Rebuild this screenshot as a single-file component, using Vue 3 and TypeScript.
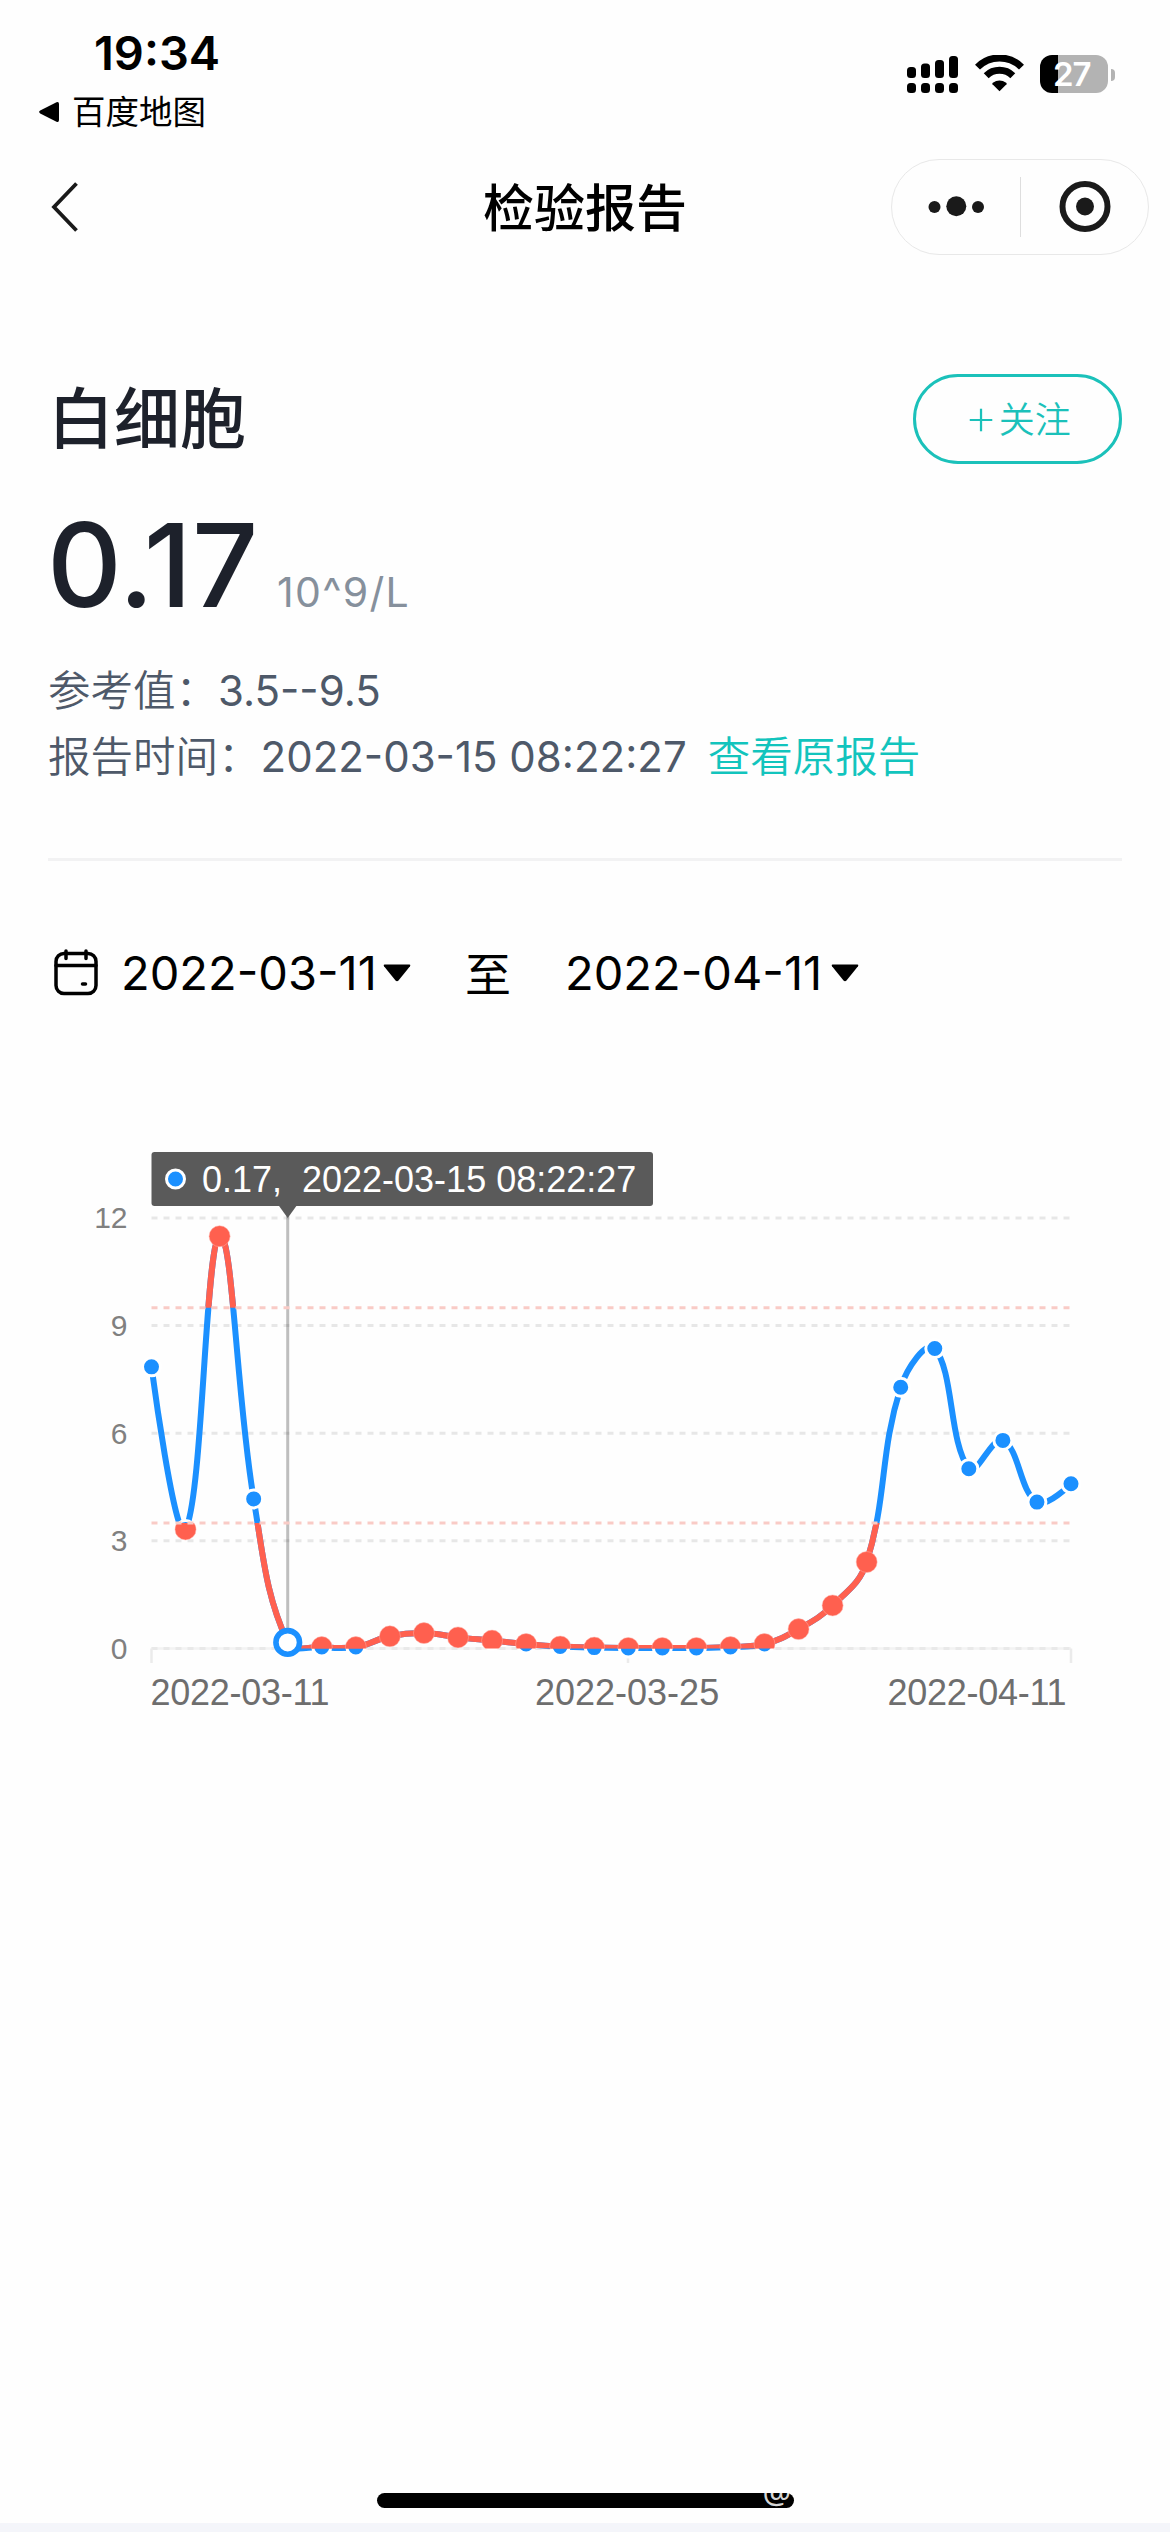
<script setup lang="ts">
interface Point {
  x: number
  y: number
}

const plotLeft = 151.5
const plotRight = 1071
const baseY = 1648.5
const unit = 35.88

const signalBars = [11, 14.5, 18, 22]
const yTicks = [12, 9, 6, 3, 0]
const limits = [9.5, 3.5]

const values = [
  7.85, 3.32, 11.49, 4.17, 0.17, 0.04, 0.04, 0.34, 0.43, 0.31, 0.22, 0.125, 0.055, 0.025,
  0.015, 0.015, 0.015, 0.04, 0.125, 0.54, 1.2, 2.41, 7.28, 8.36, 5.01, 5.8, 4.08, 4.59,
]
const selected = 4

const yOf = (v: number): number => baseY - v * unit
const step = (plotRight - plotLeft) / (values.length - 1)
const points: Point[] = values.map((v, i) => ({ x: plotLeft + i * step, y: yOf(v) }))
const markers = points.filter((_, i) => i !== selected)
const active = points[selected]

function smoothPath(pts: Point[], smooth = 0.4): string {
  const controls = pts.map((p, i) => {
    const prev = pts[i - 1]
    const next = pts[i + 1]
    if (!prev || !next) return { before: p, after: p }
    const d0 = Math.hypot(p.x - prev.x, p.y - prev.y)
    const d1 = Math.hypot(p.x - next.x, p.y - next.y)
    const vx = (next.x - prev.x) * smooth
    const vy = (next.y - prev.y) * smooth
    const a = d0 / (d0 + d1)
    const b = d1 / (d0 + d1)
    return {
      before: { x: p.x - vx * a, y: p.y - vy * a },
      after: { x: p.x + vx * b, y: p.y + vy * b },
    }
  })
  let d = `M${pts[0].x} ${pts[0].y}`
  for (let i = 1; i < pts.length; i++) {
    const c1 = controls[i - 1].after
    const c2 = controls[i].before
    d += ` C${c1.x} ${c1.y} ${c2.x} ${c2.y} ${pts[i].x} ${pts[i].y}`
  }
  return d
}

const curve = smoothPath(points)
</script>

<template>
  <div class="screen">
    <header class="status">
      <div class="status-left">
        <div class="time">19:34</div>
        <div class="back-app">
          <svg width="22" height="22" viewBox="0 0 22 22">
            <path d="M2.2 9.6 18.5 1.3Q21 .4 21 3V19Q21 21.600 18.500 20.700L2.200 12.400Q0 11 2.200 9.600Z" />
          </svg>
          <span>百度地图</span>
        </div>
      </div>
      <div class="status-right">
        <svg class="signal" width="51" height="38" viewBox="0 0 51 38">
          <g v-for="(h, i) in signalBars" :key="i">
            <rect :x="i * 14" :y="23 - h" width="9" :height="h" rx="3.500" />
            <rect :x="i * 14" y="28" width="9" height="10" rx="3.500" />
          </g>
        </svg>
        <svg class="wifi" width="49" height="37" viewBox="0 0 49 37">
          <path d="M24.500 36.300 17.500 29.200Q16.900 28.400 17.800 27.700Q24.500 23.300 31.200 27.700Q32.100 28.400 31.500 29.200Z" />
          <path d="M11.200 20.800A19 19 0 0 1 37.800 20.800" />
          <path d="M2.500 12.100A31 31 0 0 1 46.500 12.100" />
        </svg>
        <div class="battery"><span>27</span></div>
        <div class="nub"></div>
      </div>
    </header>

    <nav class="nav">
      <svg class="back" width="28" height="52" viewBox="0 0 28 52">
        <path d="M25.500 2.500 3 26 25.500 49.500" />
      </svg>
      <h1>检验报告</h1>
      <div class="capsule">
        <svg width="256" height="94" viewBox="0 0 256 94">
          <circle cx="42.500" cy="47" r="6" />
          <circle cx="64.300" cy="46.300" r="10" />
          <circle cx="86" cy="47" r="6" />
          <path class="split" d="M128.500 17V77" />
          <circle class="ring" cx="193" cy="46.500" r="22.500" />
          <circle cx="193" cy="46.500" r="9" />
        </svg>
      </div>
    </nav>

    <section class="summary">
      <div class="title-row">
        <h2>白细胞</h2>
        <button class="follow" type="button"><span class="plus">+</span>关注</button>
      </div>
      <div class="value-row">
        <span class="value">0.17</span>
        <span class="unit">10^9/L</span>
      </div>
      <div class="info"><span class="label">参考值：</span><span class="num">3.5--9.5</span></div>
      <div class="info">
        <span class="label">报告时间：</span><span class="num">2022-03-15 08:22:27</span>
        <a class="link">查看原报告</a>
      </div>
    </section>

    <section class="range">
      <svg class="calendar" width="44" height="48" viewBox="0 0 44 48">
        <rect x="2" y="4.500" width="40" height="40" rx="8" />
        <path d="M2 16.500H42M12 2V9.500M32 2V9.500" />
        <path d="M28.500 35H31.500" />
      </svg>
      <span class="date">2022-03-11</span>
      <svg class="caret" width="28" height="18" viewBox="0 0 28 18">
        <path d="M1.500 .5H26.500Q28 .7 27 2.200L15.500 16.400Q14 18 12.500 16.400L1 2.200Q0 .7 1.500 .5Z" />
      </svg>
      <span class="to">至</span>
      <span class="date second">2022-04-11</span>
      <svg class="caret" width="28" height="18" viewBox="0 0 28 18">
        <path d="M1.500 .5H26.500Q28 .7 27 2.200L15.500 16.400Q14 18 12.500 16.400L1 2.200Q0 .7 1.500 .5Z" />
      </svg>
    </section>

    <svg class="chart" width="1170" height="600" viewBox="0 1130 1170 600">
      <defs>
        <clipPath id="above"><rect x="0" y="1130" width="1170" :height="yOf(9.5) - 1130" /></clipPath>
        <clipPath id="below"><rect x="0" :y="yOf(3.5)" width="1170" :height="3.5 * unit" /></clipPath>
      </defs>

      <g class="grid">
        <path v-for="t in yTicks" :key="t" :d="`M${plotLeft} ${yOf(t)}H${plotRight}`" />
      </g>
      <g class="ticks">
        <path :d="`M${plotLeft} ${baseY}H${plotRight}`" opacity=".6" />
        <path :d="`M${plotLeft} ${baseY}V1663M628 ${baseY}V1663M${plotRight} ${baseY}V1663`" />
      </g>
      <g class="y-labels">
        <text v-for="t in yTicks" :key="t" x="127.500" :y="yOf(t) + 10.5">{{ t }}</text>
      </g>
      <g class="x-labels">
        <text x="150.500" y="1705" textLength="179">2022-03-11</text>
        <text x="535" y="1705">2022-03-25</text>
        <text x="887.500" y="1705" textLength="179">2022-04-11</text>
      </g>

      <path class="cursor" :d="`M${active.x} 1216V${baseY}`" />

      <g class="normal">
        <path :d="curve" />
        <circle v-for="(p, i) in markers" :key="i" :cx="p.x" :cy="p.y" r="9" />
      </g>
      <g v-for="zone in ['above', 'below']" :key="zone" class="abnormal" :clip-path="`url(#${zone})`">
        <path :d="curve" />
        <circle v-for="(p, i) in markers" :key="i" :cx="p.x" :cy="p.y" r="10.500" />
      </g>
      <g class="limits">
        <path v-for="l in limits" :key="l" :d="`M${plotLeft} ${yOf(l)}H${plotRight}`" />
      </g>
      <circle class="active" :cx="active.x" :cy="active.y" r="11.800" />

      <g class="tooltip">
        <rect x="151.500" y="1152" width="501.500" height="54" rx="3" />
        <path :d="`M${active.x - 9} 1205.5h18l-9 12.500z`" />
        <circle cx="175.500" cy="1179" r="9" />
        <text x="202" y="1192">0.17,</text>
        <text x="302" y="1192">2022-03-15 08:22:27</text>
      </g>
    </svg>

    <footer class="bottom">
      <div class="home"><span>@</span></div>
    </footer>
  </div>
</template>

<style>
body {
  margin: 0;
  background: #fff;
}
</style>

<style scoped>
.screen {
  width: 1170px;
  height: 2532px;
  display: flex;
  flex-direction: column;
  overflow: hidden;
  background: #fefefe;
  color: #000;
  font-family: Inter, "Noto Sans CJK SC", sans-serif;
}
svg {
  display: block;
  flex: none;
}
.status {
  height: 148px;
  flex: none;
  display: flex;
  justify-content: space-between;
}
.time {
  margin: 23px 0 0 94px;
  height: 60px;
  line-height: 60px;
  font-size: 47px;
  font-weight: 600;
}
.back-app {
  display: flex;
  align-items: center;
  margin: 8px 0 0 38px;
  height: 41px;
  gap: 12px;
  font-size: 33.500px;
  font-weight: 400;
}
.back-app span {
  padding-bottom: 4px;
}
.status-right {
  display: flex;
  margin: 55px 55px 0 0;
  height: 38px;
}
.wifi {
  margin-left: 17px;
}
.wifi path + path {
  fill: none;
  stroke: #000;
  stroke-width: 7;
}
.battery {
  width: 68px;
  height: 38px;
  margin-left: 16px;
  border-radius: 12px;
  background: linear-gradient(90deg, #000 18px, #b3b3b3 18px);
  color: #fff;
  font-size: 33px;
  font-weight: 600;
  line-height: 38px;
}
.battery span {
  margin-left: 13px;
  letter-spacing: -1px;
}
.nub {
  width: 4px;
  height: 12px;
  margin: 14px 0 0 3px;
  border-radius: 0 5px 5px 0;
  background: #b3b3b3;
}
.nav {
  height: 118px;
  flex: none;
  display: grid;
  grid-template-columns: 1fr auto 1fr;
  align-items: center;
}
.back {
  margin-left: 51px;
  fill: none;
  stroke: #1a1a1a;
  stroke-width: 3.800;
}
h1 {
  margin: 0;
  padding-top: 4px;
  font-size: 51px;
  font-weight: 500;
  line-height: 60px;
}
.capsule {
  justify-self: end;
  margin-right: 21px;
  border: 1px solid #e8e8e8;
  border-radius: 48px;
  fill: #1a1a1a;
}
.split {
  stroke: #dedede;
}
.ring {
  fill: none;
  stroke: #1a1a1a;
  stroke-width: 6;
}
.summary {
  height: 484px;
  flex: none;
  margin: 0 48px;
  padding-top: 108px;
  border-bottom: 3px solid #f2f2f3;
  color: #4e5969;
}
.title-row {
  display: flex;
  justify-content: space-between;
  height: 90px;
}
h2 {
  margin: 0;
  font-size: 66px;
  font-weight: 500;
  line-height: 90px;
  color: #1d212b;
}
.follow {
  box-sizing: border-box;
  width: 209px;
  height: 90px;
  display: flex;
  justify-content: center;
  align-items: center;
  padding: 0 0 4px;
  border: 3px solid #1bc1ba;
  border-radius: 45px;
  background: none;
  color: #1bc1ba;
  font: 350 36px/1 "Noto Sans CJK SC", sans-serif;
}
.plus {
  margin-right: 1px;
  font: 200 52px/40px Inter, sans-serif;
}
.value-row {
  display: flex;
  align-items: baseline;
  height: 194px;
  line-height: 202px;
}
.value {
  width: 230px;
  margin-left: -1px;
  font-size: 116px;
  font-weight: 500;
  color: #1d212b;
}
.unit {
  font-size: 41px;
  letter-spacing: 1.300px;
  color: #86909c;
}
.info {
  display: flex;
  height: 66px;
  line-height: 66px;
  font-size: 42.500px;
}
.num {
  font-size: 42px;
}
.label {
  font-weight: 350;
}
.link {
  margin-left: 21px;
  font-size: 42.500px;
  font-weight: 350;
  color: #12c4bd;
}
.range {
  height: 100px;
  flex: none;
  margin: 62px 0 0 54px;
  display: flex;
  align-items: center;
}
.calendar {
  fill: none;
  stroke: #000;
  stroke-width: 3.500;
  stroke-linecap: round;
}
.date {
  margin-left: 23px;
  width: 262px;
  font-size: 47px;
  line-height: 100px;
  white-space: nowrap;
}
.to {
  margin-left: 54px;
  width: 47px;
  padding-bottom: 5px;
  font-size: 46px;
}
.second {
  margin-left: 53px;
  width: 266px;
}
.chart {
  margin-top: 107px;
  font-family: "Liberation Sans", Arial, sans-serif;
}
.grid path,
.limits path {
  fill: none;
  stroke: #e7e7e7;
  stroke-width: 3;
  stroke-dasharray: 6 6;
}
.limits path {
  stroke: #f9cbc6;
}
.ticks path {
  fill: none;
  stroke: #ebebeb;
  stroke-width: 2.500;
}
.y-labels text {
  font-size: 30px;
  fill: #808080;
  text-anchor: end;
}
.x-labels text {
  font-size: 36px;
  fill: #6e6e6e;
}
.cursor {
  stroke: rgba(0, 0, 0, 0.25);
  stroke-width: 3;
}
.normal path,
.abnormal path {
  fill: none;
  stroke: #1b90ff;
  stroke-width: 6;
}
.normal circle,
.tooltip circle {
  fill: #1b90ff;
  stroke: #fff;
  stroke-width: 3;
}
.abnormal path {
  stroke: #ff604f;
}
.abnormal circle {
  fill: #ff604f;
  stroke: #ffb0a8;
  stroke-width: 0.500;
}
.active {
  fill: #fff;
  stroke: #1b90ff;
  stroke-width: 5.600;
}
.tooltip rect,
.tooltip path {
  fill: #5a5a5a;
}
.tooltip text {
  font-size: 36px;
  fill: #fff;
}
.bottom {
  margin-top: auto;
  height: 39px;
  flex: none;
  border-bottom: 9px solid #f4f5fa;
}
.home {
  position: relative;
  width: 417px;
  height: 15px;
  margin: 0 auto;
  margin-top: 9px;
  border-radius: 8px;
  background: #000;
}
.home span {
  position: absolute;
  left: 386px;
  top: -17px;
  font: 32px/32px "Noto Sans", sans-serif;
  color: rgba(254, 254, 254, 0.86);
}
</style>
